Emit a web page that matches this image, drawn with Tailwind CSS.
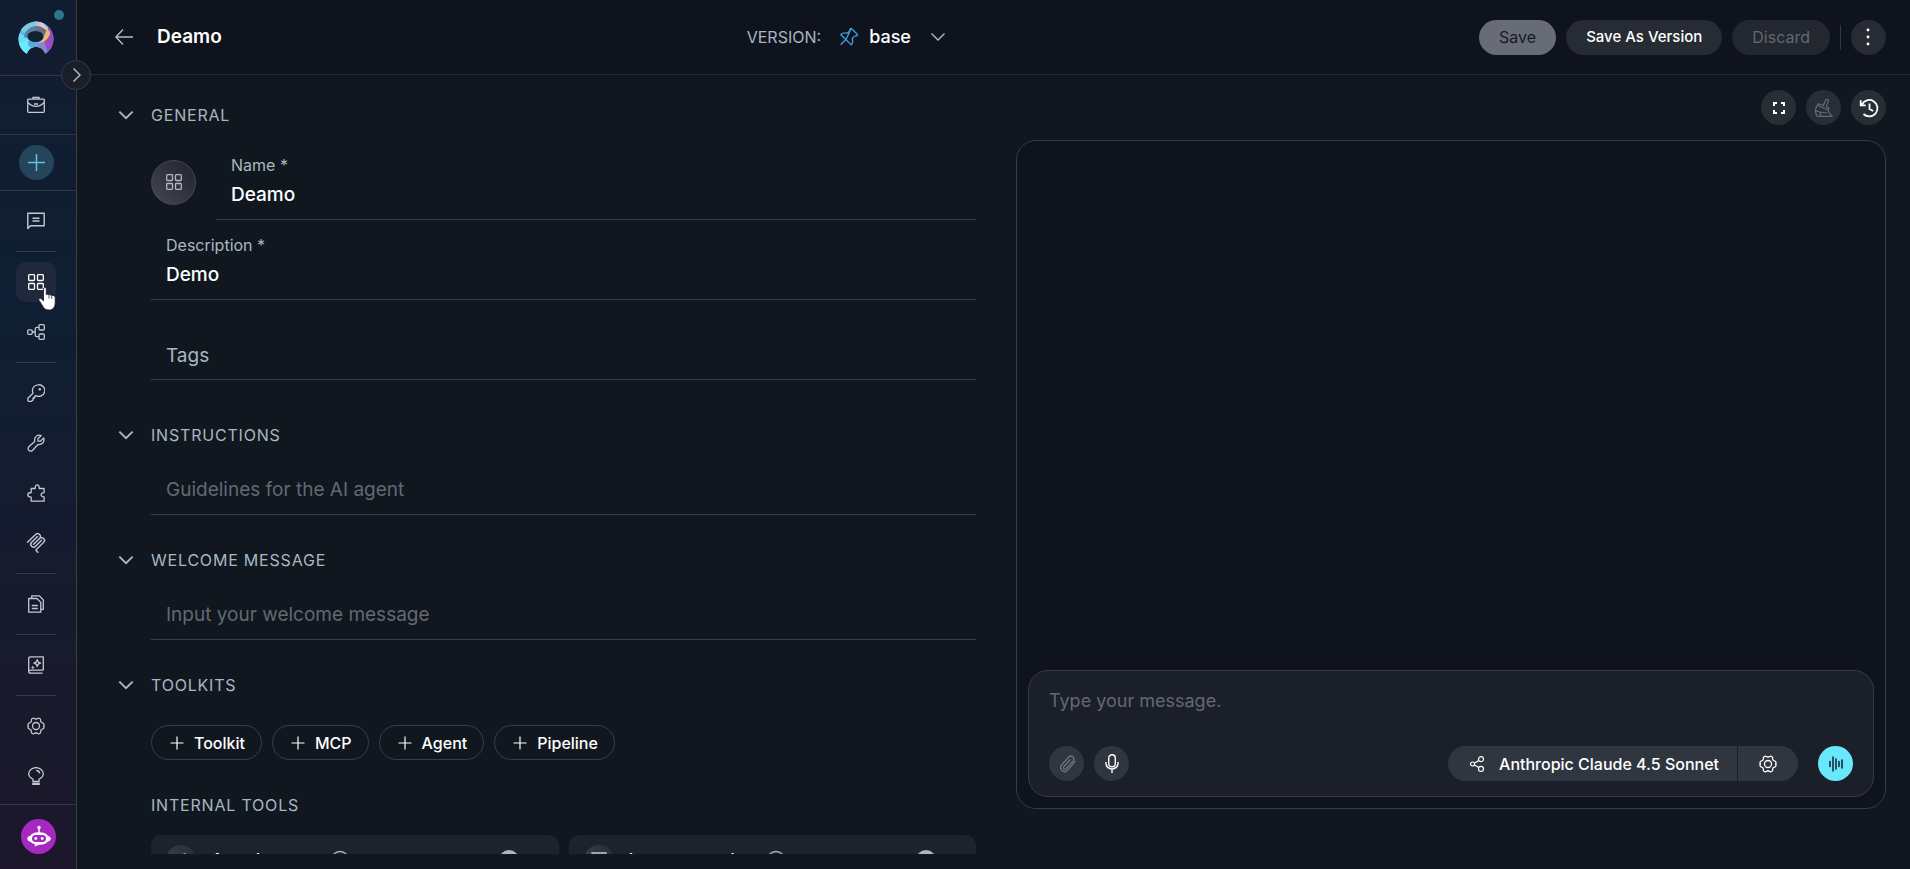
<!DOCTYPE html>
<html lang="en">
<head>
<meta charset="utf-8">
<meta name="viewport" content="width=device-width, initial-scale=1">
<title>Deamo</title>
<script src="https://cdn.jsdelivr.net/npm/@tailwindcss/browser@4"></script>
</head>
<body class="h-screen overflow-hidden bg-[#10171f] font-['Inter',sans-serif] text-base text-white">

<!-- Shared line icons on an 18px grid -->
<svg class="hidden" aria-hidden="true">
  <symbol id="i-grid" viewBox="0 0 18 18"><g fill="none" stroke="currentColor" stroke-width="1.3"><rect x="1.7" y="1.7" width="5.8" height="5.8" rx=".8"/><rect x="10.5" y="1.7" width="5.8" height="5.8" rx=".8"/><rect x="1.7" y="10.5" width="5.8" height="5.8" rx=".8"/><rect x="10.5" y="10.5" width="5.8" height="5.8" rx=".8"/></g></symbol>
  <symbol id="i-gear" viewBox="0 0 18 18"><g fill="none" stroke="currentColor" stroke-width="1.3" stroke-linejoin="round"><path d="M5.9 1.300 Q6.800.9 7.500 1.600 Q9 2.900 10.500 1.600 Q11.200.9 12.100 1.300 L13 1.800 Q13.800 2.300 13.600 3.300 Q13.400 5.400 15.400 5.900 Q16.400 6.100 16.800 7 Q17.400 8.200 16.700 8.800 L16.600 9 Q17.400 9.900 16.800 11 Q16.400 11.900 15.400 12.100 Q13.400 12.600 13.600 14.700 Q13.800 15.700 13 16.200 L12.100 16.700 Q11.200 17.100 10.500 16.400 Q9 15.100 7.500 16.400 Q6.800 17.100 5.900 16.700 L5 16.200 Q4.200 15.700 4.400 14.700 Q4.600 12.600 2.600 12.100 Q1.600 11.900 1.200 11 Q.6 9.900 1.400 9 Q.6 8.100 1.200 7 Q1.600 6.100 2.600 5.900 Q4.600 5.400 4.400 3.300 Q4.200 2.300 5 1.800 Z"/><circle cx="9" cy="9" r="3.500"/></g></symbol>
  <symbol id="i-chevron" viewBox="0 0 18 18"><path d="M1.500 5.200 9 12.600 16.500 5.200" fill="none" stroke="currentColor" stroke-width="2.200"/></symbol>
  <symbol id="i-plus" viewBox="0 0 14 14"><path d="M7 .5v13M.5 7h13" fill="none" stroke="currentColor" stroke-width="1.200"/></symbol>
  <symbol id="i-info" viewBox="0 0 20 20"><g fill="none" stroke="currentColor" stroke-width="1.400"><circle cx="10" cy="10" r="8.500"/><path d="M10 9v5M10 5.500v1.600"/></g></symbol>
</svg>

<div class="flex h-full">

  <nav aria-label="Main" class="relative z-10 flex w-[77px] shrink-0 flex-col border-r border-[#383c45] bg-linear-to-b from-[#121c31] via-[#0f1e32] via-35% to-[#1c172a] text-[#c3c8d2]">
    <div class="relative h-[76px] border-b border-[#2c3644]">
      <a href="#" aria-label="Home" class="absolute top-[21px] left-[18px]">
        <svg class="size-9" viewBox="0 0 36 36"><defs><clipPath id="disc"><path d="M18 .5a17.500 17.500 0 0 1 9.300 32.300C25.500 28 22 26 18 26s-7.500 2-9.300 6.800A17.500 17.500 0 0 1 18 .5Z"/></clipPath></defs><g clip-path="url(#disc)"><path fill="#58b7dc" d="M0 0h36v36H0z"/><path fill="#62dff5" d="M0 12 10 16v20H0z"/><path fill="#6ee8fc" d="M0 22 11 18 15 26 8 36H0z"/><path fill="#80c9e0" d="M2 7 12 2 18 0v5L6 12z"/><path fill="#b9c4cf" d="M17 0h8l3 6-10-1z"/><path fill="#d6c8de" d="M22 0 32 9l-3 4-8-8z"/><path fill="#9a4ac4" d="M30 6 36 10v26H27l-4-12 7-9z"/><path fill="#8487cc" d="M17 26 26 19 31 36H18z"/><path fill="#5aa9d6" d="M10 20 20 21 16 29 10 24z"/><path fill="#56819f" d="M6 16C7 9 13 5 18 5v7L9 17z"/><path fill="#746b80" d="M18 5c5 0 9 3 11 5l-5 6-6-5z"/><path fill="#f2b66c" d="M28 6 32 11C32 17 27 21 21 22 26 17 29 12 28 6z"/></g><ellipse cx="17.500" cy="15.500" rx="8" ry="5.500" fill="#132036"/></svg>
      </a>
      <span class="absolute top-2.5 left-[54px] size-2.5 rounded-full bg-[#297789]"></span>
      <button aria-label="Expand menu" class="absolute top-[60px] left-[61px] flex size-[30px] items-center justify-center rounded-full border border-[#383c46] bg-[#191e29] text-[#b9bfca]">
        <svg class="size-4" viewBox="0 0 16 16"><path d="M5.500 1.500 12 8l-6.500 6.500" fill="none" stroke="currentColor" stroke-width="1.400"/></svg>
      </button>
    </div>
    <div class="flex h-[59px] items-center border-b border-[#2c3644] pl-[27px]">
      <a href="#" aria-label="Projects"><svg class="size-[18px]" viewBox="0 0 18 18"><g fill="none" stroke="currentColor" stroke-width="1.300"><rect x=".7" y="3.200" width="16.600" height="13.100" rx=".8"/><path d="M6 3V1.500h6V3M.8 6.500Q4.500 10.300 9 10.300T17.200 6.500M7 8h4"/></g></svg></a>
    </div>
    <div class="flex h-14 items-center border-b border-[#2c3644] pl-[19px]">
      <button aria-label="Create" class="flex size-[35px] items-center justify-center rounded-full bg-[#25465a] text-[#5cc3e6]"><svg class="size-[17px]" viewBox="0 0 17 17"><path d="M8.500 0v17M0 8.500h17" stroke="currentColor" stroke-width="1.500"/></svg></button>
    </div>
    <div class="flex w-[72px] flex-1 flex-col items-center gap-2.5 pt-2.5">
      <a href="#" aria-label="Chat" class="flex size-10 shrink-0 items-center justify-center rounded-xl"><svg class="size-[18px]" viewBox="0 0 18 18"><g fill="none" stroke="currentColor" stroke-width="1.400" stroke-linejoin="round"><path d="M.8 1.200h16.400v12.600H3.500L.8 16.500z"/><path d="M5.500 6.200h7M5.500 9h7"/></g></svg></a>
      <hr class="w-10 border-[#33384a]">
      <a href="#" aria-label="Agents" aria-current="page" class="relative flex size-10 shrink-0 items-center justify-center rounded-[10px] bg-[#1f293b] text-white">
        <svg class="size-[18px]"><use href="#i-grid"/></svg>
        <svg class="absolute top-[25px] left-[22px] h-6 w-[19px]" viewBox="0 0 19 24"><path d="M5.500 1.500c0-1.300 2.800-1.300 2.800.2v6c1-.8 2.300-.5 2.700.3 1-.6 2.200-.2 2.600.7 1.600-.6 3.600 0 3.600 1.800v5.200c0 3.800-2 7.300-6 7.300-4.200 0-5.500-2-7.200-5L1 13.200c-.8-1.600 1-2.600 2.400-1.300l2.100 2z" fill="#fff" stroke="#111a2b" stroke-width=".8"/><path d="M11 8v3.500M13.700 9v3" stroke="#111a2b" stroke-width=".7"/></svg>
      </a>
      <a href="#" aria-label="Pipelines" class="flex size-10 shrink-0 items-center justify-center"><svg class="size-[18px]" viewBox="0 0 18 18"><g fill="none" stroke="currentColor" stroke-width="1.300"><rect x=".7" y="6.800" width="4.500" height="4.500" rx="1"/><rect x="12" y="1.700" width="5.300" height="5.300" rx="1"/><rect x="12" y="11" width="5.300" height="5.300" rx="1"/><path d="M5.200 9h3M12 4.300h-2Q8.200 4.300 8.200 6v6q0 1.700 1.800 1.700h2"/></g></svg></a>
      <hr class="w-10 border-[#33384a]">
      <a href="#" aria-label="Credentials" class="flex size-10 shrink-0 items-center justify-center"><svg class="size-[18px]" viewBox="0 0 18 18"><path d="M11.300.8a6 5.800 0 1 1-2.500 10.800L7.500 12.500 7.700 14H6v2L4.500 17.300H1.500Q.5 16.500.9 14.200L6 9.200Q5.400 7.800 5.400 6.300A5.900 5.700 0 0 1 11.300.8Z" fill="none" stroke="currentColor" stroke-width="1.300" stroke-linejoin="round"/><circle cx="12.800" cy="5.200" r="1.200" fill="currentColor"/></svg></a>
      <a href="#" aria-label="Toolkits" class="flex size-10 shrink-0 items-center justify-center"><svg class="size-[18px]" viewBox="0 0 18 18"><path d="M14.200 1.600 11 4.800v2.400h2.400l3.300-3.300c1.200 3.500-1.500 7.200-5.800 6.600l-5.200 5.800c-1.200 1.300-3 1.200-4-.1-.9-1.300-.8-2.600.4-3.700l5.600-5C6.700 3.300 10.500 0 14.200 1.600Z" fill="none" stroke="currentColor" stroke-width="1.300" stroke-linejoin="round"/></svg></a>
      <a href="#" aria-label="Integrations" class="flex size-10 shrink-0 items-center justify-center"><svg class="size-[18px]" viewBox="0 0 18 18"><path d="M4.200 4.500h4V3q.2-2 2-2.100 1.900.1 2 2.100v1.500h4.900v4.100q-2.800-.2-3 2.100.2 2.200 3 2.100v4.400H4.200v-4Q.8 13 .8 10.800T4.200 8.500Z" fill="none" stroke="currentColor" stroke-width="1.300" stroke-linejoin="round"/></svg></a>
      <a href="#" aria-label="MCP servers" class="flex size-10 shrink-0 items-center justify-center"><svg class="size-5" viewBox="0 0 24 24" fill="currentColor"><path d="M15.688 2.343a2.588 2.588 0 00-3.610 0l-9.626 9.440a.863.863 0 01-1.203 0 .823.823 0 010-1.180l9.626-9.440a4.313 4.313 0 016.016 0 4.116 4.116 0 011.204 3.540 4.300 4.300 0 013.609 1.180l.05.05a4.115 4.115 0 010 5.900l-8.706 8.537a.274.274 0 000 .393l1.788 1.754a.823.823 0 010 1.180.863.863 0 01-1.203 0l-1.788-1.753a1.920 1.920 0 010-2.754l8.706-8.538a2.470 2.470 0 000-3.540l-.05-.049a2.588 2.588 0 00-3.607-.003l-7.172 7.034-.002.002-.098.097a.863.863 0 01-1.204 0 .823.823 0 010-1.180l7.273-7.133a2.470 2.470 0 00-.003-3.537z"/><path d="M14.485 4.703a.823.823 0 000-1.180.863.863 0 00-1.204 0l-7.119 6.982a4.115 4.115 0 000 5.900 4.314 4.314 0 006.016 0l7.120-6.982a.823.823 0 000-1.180.863.863 0 00-1.204 0l-7.119 6.982a2.588 2.588 0 01-3.610 0 2.470 2.470 0 010-3.540l7.120-6.982z"/></svg></a>
      <hr class="w-10 border-[#33384a]">
      <a href="#" aria-label="Artifacts" class="flex size-10 shrink-0 items-center justify-center"><svg class="size-[18px]" viewBox="0 0 18 18"><g fill="none" stroke="currentColor" stroke-width="1.300" stroke-linejoin="round"><path d="M4.700 3V.8h7.500l4.100 4.100v9.400h-2.500"/><path d="M1.700 3.500h8.200l3.900 3.900v9.800H1.700z"/><path d="M4.800 10.500h6M4.800 13.500h6" stroke-width="1.500"/></g></svg></a>
      <hr class="w-10 border-[#33384a]">
      <a href="#" aria-label="Prompt library" class="flex size-10 shrink-0 items-center justify-center"><svg class="size-[18px]" viewBox="0 0 18 18"><g fill="none" stroke="currentColor" stroke-width="1.300" stroke-linejoin="round"><path d="M16.300 14.200V.8H3.500Q1.700.8 1.700 2.700v12.500q0 2 2 2h11.800M16.300 14.200H3.500q-1.600 0-1.800 1.300"/><path d="m10.200 3.700 1 2.400 2.300 1-2.300 1-1 2.400-1-2.400-2.300-1 2.300-1z"/></g><path d="m5.800 9.300.6 1.600 1.600.6-1.600.6-.6 1.600-.6-1.600-1.600-.6 1.600-.6z" fill="currentColor"/></svg></a>
      <hr class="w-10 border-[#33384a]">
      <a href="#" aria-label="Settings" class="flex size-10 shrink-0 items-center justify-center"><svg class="size-[18px]"><use href="#i-gear"/></svg></a>
      <a href="#" aria-label="Help" class="flex size-10 shrink-0 items-center justify-center"><svg class="size-[18px]" viewBox="0 0 18 18"><g fill="none" stroke="currentColor" stroke-width="1.300"><path d="M6 14.300v-2Q1.700 9.900 1.700 7A7.300 6.400 0 0 1 16.300 7q0 2.900-4.300 5.300v2z"/><path d="M9.300 3.500q2.900.2 3.500 2.800M5.200 16.200h7.600M5.200 17.500h7.600"/></g></svg></a>
    </div>
    <div class="h-[65px] border-t border-[#343446] pt-3.5 pl-[21px]">
      <button aria-label="Account" class="flex size-[35px] items-center justify-center rounded-full bg-[#a528c0]">
        <svg class="size-[26px]" viewBox="0 0 26 26"><path fill="#fff" d="M12.300 5h1.400v3.200Q20 8.400 21.500 11.500q3 .8 3.500 3-.5 2.500-3.500 3.200-2 2.900-8 3.100L8.500 22.500l.5-2.300q-3.400-.7-4.500-2.500-3-.7-3.500-3.200.5-2.200 3.500-3Q6 8.400 12.300 8.200z"/><circle cx="13" cy="3.500" r="1.700" fill="#fff"/><rect x="6" y="11" width="14" height="7" rx="3.500" fill="#a528c0"/><circle cx="9.800" cy="14.500" r="1.400" fill="#fff"/><circle cx="16.200" cy="14.500" r="1.400" fill="#fff"/></svg>
      </button>
    </div>
  </nav>

  <div class="flex min-w-0 flex-1 flex-col">

    <header class="flex h-[75px] shrink-0 items-center justify-between border-b border-[#262b34] bg-[#0f131d] pr-6 pl-[38px]">
      <div class="flex items-center gap-6">
        <button aria-label="Back" class="text-[#b5bcc7]"><svg class="size-[18px]" viewBox="0 0 18 18"><path d="M8 1.500.9 9 8 16.500M1 9h17" fill="none" stroke="currentColor" stroke-width="1.400"/></svg></button>
        <h1 class="text-[19px] font-semibold">Deamo</h1>
      </div>
      <div class="flex items-center pr-2">
        <label for="version" class="text-base text-[#a9b7c1]">VERSION:</label>
        <svg class="ml-[18px] size-5 text-[#3f9fe0]" viewBox="0 0 20 20"><path d="M12.200 1.300 18.500 7.500Q18.600 9 16 8.900L13.300 11.500Q14.500 15 12.200 17.900L6.800 12.500 1.600 17.800M7 12.700 1.700 7.500Q4.500 5.300 8.200 6.200L10.900 3.600Q10.500 1.500 12.200 1.300ZM6.800 12.500 12.200 17.900" fill="none" stroke="currentColor" stroke-width="1.300" stroke-linejoin="round"/></svg>
        <div class="relative ml-2.5">
          <select id="version" class="w-[77px] appearance-none bg-transparent text-lg font-medium text-white"><option class="bg-[#191e29]">base</option></select>
          <svg class="pointer-events-none absolute top-1.5 right-0 size-4 text-[#b5bcc7]" viewBox="0 0 16 16"><path d="M1.500 4.500 8 11l6.500-6.500" fill="none" stroke="currentColor" stroke-width="1.300"/></svg>
        </div>
      </div>
      <div class="flex items-center gap-2.5">
        <button class="h-[35px] rounded-full bg-[#686c76] px-5 text-base text-[#171b26]">Save</button>
        <button class="h-[35px] rounded-full bg-[#272b33] px-5 text-[15px] font-medium">Save As Version</button>
        <button class="h-[35px] rounded-full bg-[#23272f] px-5 text-base text-[#636771]">Discard</button>
        <span class="h-[25px] w-px bg-[#343841]"></span>
        <button aria-label="More actions" class="flex size-[35px] items-center justify-center rounded-full bg-[#272b33]"><svg class="size-[18px]" viewBox="0 0 18 18" fill="currentColor"><circle cx="9" cy="2" r="1.400"/><circle cx="9" cy="9" r="1.400"/><circle cx="9" cy="16" r="1.400"/></svg></button>
      </div>
    </header>

    <main class="grid min-h-0 flex-1 grid-cols-2 gap-10 pr-6 pl-[29px]">

      <form class="mb-[15px] overflow-hidden pt-[25px] pl-3">
        <section>
          <button type="button" class="flex h-[30px] items-center gap-[17px] text-base tracking-wider text-[#a9b7c1]"><svg class="size-4"><use href="#i-chevron"/></svg>GENERAL</button>
          <div class="mt-2.5 pl-[33px]">
            <div class="flex items-center gap-5">
              <div class="mt-1 flex size-[45px] shrink-0 items-center justify-center rounded-full border border-[#454852] bg-linear-to-tr from-[#454751] to-[#20242d] text-[#b0b8c4]"><svg class="size-[18px]"><use href="#i-grid"/></svg></div>
              <div class="flex h-20 flex-1 flex-col gap-1 border-b border-[#3b3e46] px-[15px] pt-[15px]">
                <label for="name" class="h-5 text-base leading-5 text-[#a9b7c1]">Name *</label>
                <input id="name" value="Deamo" class="h-[30px] bg-transparent text-[19px] font-medium outline-none">
              </div>
            </div>
            <div class="flex h-20 flex-col gap-1 border-b border-[#3b3e46] px-[15px] pt-[15px]">
              <label for="desc" class="h-5 text-base leading-5 text-[#a9b7c1]">Description *</label>
              <input id="desc" value="Demo" class="h-[30px] bg-transparent text-[19px] font-medium outline-none">
            </div>
            <div class="flex h-20 flex-col justify-end border-b border-[#3b3e46] px-[15px] pb-[9px]">
              <input aria-label="Tags" placeholder="Tags" class="h-[30px] bg-transparent text-[19px] outline-none placeholder:text-[#a9b7c1]">
            </div>
          </div>
        </section>

        <section class="mt-10">
          <button type="button" class="flex h-[30px] items-center gap-[17px] text-base tracking-wider text-[#a9b7c1]"><svg class="size-4"><use href="#i-chevron"/></svg>INSTRUCTIONS</button>
          <div class="mt-6 ml-[33px] flex h-[41px] border-b border-[#3b3e46] px-[15px] pb-2.5">
            <input aria-label="Instructions" placeholder="Guidelines for the AI agent" class="h-[30px] flex-1 bg-transparent text-[19px] outline-none placeholder:text-[#646873]">
          </div>
        </section>

        <section class="mt-[30px]">
          <button type="button" class="flex h-[30px] items-center gap-[17px] text-base tracking-wider text-[#a9b7c1]"><svg class="size-4"><use href="#i-chevron"/></svg>WELCOME MESSAGE</button>
          <div class="mt-6 ml-[33px] flex h-[41px] border-b border-[#3b3e46] px-[15px] pb-2.5">
            <input aria-label="Welcome message" placeholder="Input your welcome message" class="h-[30px] flex-1 bg-transparent text-[19px] outline-none placeholder:text-[#646873]">
          </div>
        </section>

        <section class="mt-[30px]">
          <button type="button" class="flex h-[30px] items-center gap-[17px] text-base tracking-wider text-[#a9b7c1]"><svg class="size-4"><use href="#i-chevron"/></svg>TOOLKITS</button>
          <div class="mt-[25px] flex gap-2.5 pl-[33px] text-base font-medium">
            <button type="button" class="flex h-[35px] items-center gap-2.5 rounded-full border border-[#3b3e46] pr-4 pl-[18px]"><svg class="size-3.5"><use href="#i-plus"/></svg>Toolkit</button>
            <button type="button" class="flex h-[35px] items-center gap-2.5 rounded-full border border-[#3b3e46] pr-4 pl-[18px]"><svg class="size-3.5"><use href="#i-plus"/></svg>MCP</button>
            <button type="button" class="flex h-[35px] items-center gap-2.5 rounded-full border border-[#3b3e46] pr-4 pl-[18px]"><svg class="size-3.5"><use href="#i-plus"/></svg>Agent</button>
            <button type="button" class="flex h-[35px] items-center gap-2.5 rounded-full border border-[#3b3e46] pr-4 pl-[18px]"><svg class="size-3.5"><use href="#i-plus"/></svg>Pipeline</button>
          </div>
          <h2 class="mt-[30px] h-[30px] pl-[33px] text-base leading-[30px] tracking-wider text-[#a9b7c1]">INTERNAL TOOLS</h2>
          <div class="mt-[15px] grid grid-cols-2 gap-2.5 pl-[33px]">
            <div class="flex h-[50px] items-center rounded-[10px] bg-[#1d232c] px-[15px]">
              <span class="flex size-[30px] items-center justify-center rounded-full bg-linear-to-tr from-[#454751] to-[#272b34] text-[#c3c8d2]"><svg class="size-4" viewBox="0 0 18 18"><path d="m15.500 7.500-7 7.200c-3 3-7.500-1.200-4.500-4.300L11.500 3c2-2 5 .8 3 3l-7 7" fill="none" stroke="currentColor" stroke-width="1.500"/></svg></span>
              <label for="attachments" class="mt-0.5 ml-[15px] text-lg font-medium">Attachments</label>
              <svg class="ml-2.5 size-5 text-[#a9b7c1]"><use href="#i-info"/></svg>
              <input id="attachments" type="checkbox" role="switch" class="ml-auto h-3 w-[45px] appearance-none rounded-full bg-[#3b3e46] before:relative before:-top-1 before:block before:size-5 before:rounded-full before:bg-[#a9b7c1]">
            </div>
            <div class="flex h-[50px] items-center rounded-[10px] bg-[#1d232c] px-[15px]">
              <span class="flex size-[30px] items-center justify-center rounded-full bg-linear-to-tr from-[#454751] to-[#272b34] text-[#c3c8d2]"><svg class="size-4" viewBox="0 0 16 16"><path d="M1 1h14v14H1zM1 12l4-4 4 4 2-2 4 4" fill="none" stroke="currentColor" stroke-width="1.300"/></svg></span>
              <label for="imagecreation" class="mt-0.5 ml-[15px] text-lg font-medium">Image creation</label>
              <svg class="ml-2.5 size-5 text-[#a9b7c1]"><use href="#i-info"/></svg>
              <input id="imagecreation" type="checkbox" role="switch" class="ml-auto h-3 w-[45px] appearance-none rounded-full bg-[#3b3e46] before:relative before:-top-1 before:block before:size-5 before:rounded-full before:bg-[#a9b7c1]">
            </div>
          </div>
        </section>
      </form>

      <section aria-label="Chat" class="flex min-h-0 flex-col gap-[15px] pt-[15px] pb-[60px]">
        <div class="flex justify-end gap-2.5">
          <button aria-label="Full screen" class="flex size-[35px] items-center justify-center rounded-full bg-[#282e36]"><svg class="size-3" viewBox="0 0 12 12"><path d="M1 4V1h3M8 1h3v3M11 8v3H8M4 11H1V8" fill="none" stroke="currentColor" stroke-width="2"/></svg></button>
          <button aria-label="Clear chat" disabled class="flex size-[35px] items-center justify-center rounded-full bg-[#282e36] text-[#656a75]"><svg class="size-5" viewBox="0 0 20 20"><path d="m9.500 7.500 2-5.500q2-1.500 3 .7l-2.300 6.200 2.500 1.100-.5 2-11-4.700 1.200-1.600zM3.200 7.300C.5 11.500 1 15 3.300 18.300h14.900c-2.200-1.600-3.500-3.500-4-6.300M1.500 12.500q6 2.500 11.700 2.200M5.700 14.300q.3 2.200 1.800 3.900" fill="none" stroke="currentColor" stroke-width="1.200" stroke-linejoin="round"/></svg></button>
          <button aria-label="History" class="flex size-[35px] items-center justify-center rounded-full bg-[#282e36]"><svg class="size-5" viewBox="0 0 20 20"><path d="M2.800 6.800A8.200 8.200 0 1 1 4.500 16M1.700 2.300v5h5M10.500 5.500V11l3.700 2" fill="none" stroke="currentColor" stroke-width="1.800"/></svg></button>
        </div>
        <div class="flex min-h-0 flex-1 flex-col justify-end rounded-[20px] border border-[#383b44] bg-[#0f131d] p-[11px]">
          <div class="flex h-[127px] flex-col justify-between rounded-[20px] border border-[#383b44] bg-[#1a1f2a] px-5 pt-[17px] pb-[15px]">
            <textarea aria-label="Message" rows="1" placeholder="Type your message." class="h-[25px] resize-none bg-transparent text-lg leading-[25px] outline-none placeholder:text-[#646873]"></textarea>
            <div class="flex items-center">
              <button aria-label="Attach file" disabled class="flex size-[35px] items-center justify-center rounded-full bg-[#303640] text-[#71757f]"><svg class="size-[18px]" viewBox="0 0 18 18"><path d="M16 6.500 8.800 14.900c-3.700 4.300-9.800-.8-6.100-5.100L9.500 2.200c2.800-3 7.200.7 4.500 3.900l-6.800 7.500c-1.500 1.700-3.800-.2-2.400-1.900l6.300-7" fill="none" stroke="currentColor" stroke-width="1.300" stroke-linecap="round" transform="translate(1 0)"/></svg></button>
              <button aria-label="Dictate" class="ml-2.5 flex size-[35px] items-center justify-center rounded-full bg-[#303640]"><svg class="h-[19px] w-3.5" viewBox="0 0 14 19"><g fill="none" stroke="currentColor" stroke-width="1.400"><rect x="3.700" y=".8" width="6.600" height="12" rx="3.300"/><path d="M1 8v1.500a6 5.500 0 0 0 12 0V8M7 15v4"/></g></svg></button>
              <div class="ml-auto flex gap-px">
                <button class="flex h-[35px] items-center gap-3.5 rounded-l-full bg-[#303640] pr-[18px] pl-[21px] text-base font-medium"><svg class="size-4" viewBox="0 0 16 18"><g fill="none" stroke="currentColor" stroke-width="1.300"><circle cx="3" cy="9" r="2.300"/><circle cx="12.500" cy="3.500" r="2.800"/><circle cx="12.500" cy="14.500" r="2.800"/><path d="m5.200 7.800 4.800-2.600M5.200 10.200l4.800 2.700"/></g></svg>Anthropic Claude 4.5 Sonnet</button>
                <button aria-label="Model settings" class="flex h-[35px] w-[60px] items-center justify-center rounded-r-full bg-[#303640]"><svg class="size-[18px]"><use href="#i-gear"/></svg></button>
              </div>
              <button aria-label="Voice mode" class="ml-5 flex size-[35px] items-center justify-center rounded-full bg-[#69e7fb] text-[#0f2030]"><svg class="size-4" viewBox="0 0 16 16"><path d="M2 5.500v5M5 1v14M8 3v10M11 5.500v5M14 4v8" fill="none" stroke="currentColor" stroke-width="1.500" stroke-linecap="round"/></svg></button>
            </div>
          </div>
        </div>
      </section>
    </main>
  </div>
</div>
</body>
</html>
